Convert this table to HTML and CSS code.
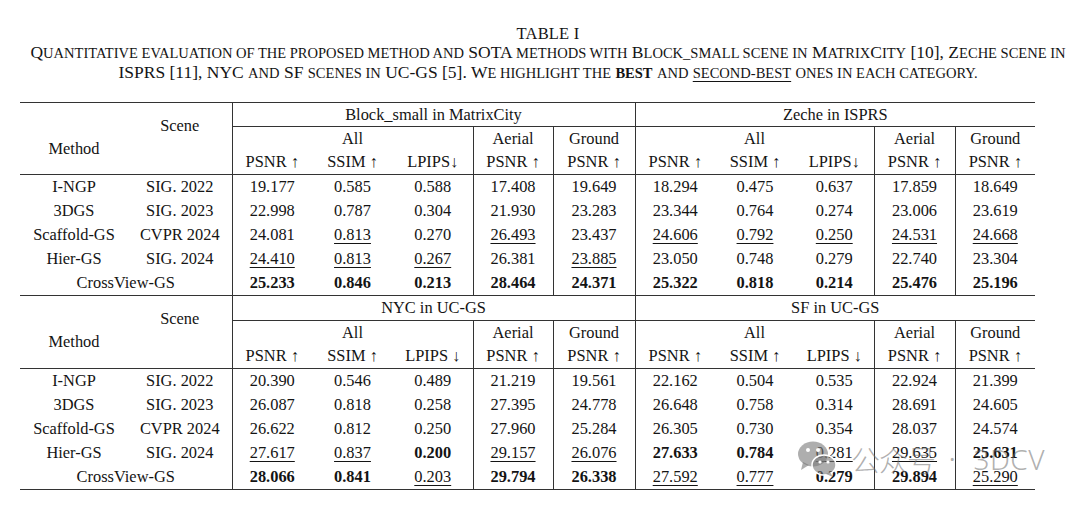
FILE: index.html
```html
<!DOCTYPE html>
<html>
<head>
<meta charset="utf-8">
<link rel="stylesheet" href="styles.css">
</head>
<body>
<div class="page">
  <div class="caption">
    <div class="title">TABLE I</div>
    <div class="cap-line">Q<span class="sc">uantitative evaluation of the proposed method and</span> SOTA <span class="sc">methods with</span> B<span class="sc">lock_small scene in</span> M<span class="sc">atrix</span>C<span class="sc">ity</span> [10], Z<span class="sc">eche scene in</span></div>
    <div class="cap-line">ISPRS [11], NYC <span class="sc">and</span> SF <span class="sc">scenes in</span> UC-GS [5]. W<span class="sc">e highlight the</span> <b class="sc">best</b> <span class="sc">and</span> <span class="sc u">second-best</span> <span class="sc">ones in each category.</span></div>
  </div>

  <table class="res">
    <colgroup>
      <col class="c-method"><col class="c-scene">
      <col class="c80"><col class="c81"><col class="c80">
      <col class="c80"><col class="c82">
      <col class="c80"><col class="c80"><col class="c79">
      <col class="c81"><col class="c80">
    </colgroup>
    <tbody class="block">
      <tr class="r-grp">
        <td rowspan="3" class="method-h">Method</td>
        <td rowspan="3" class="scene-h">Scene</td>
        <td colspan="5" class="grp vl">Block_small in MatrixCity</td>
        <td colspan="5" class="grp vl">Zeche in ISPRS</td>
      </tr>
      <tr class="r-all">
        <td colspan="3" class="vl">All</td><td class="vl">Aerial</td><td class="vl">Ground</td>
        <td colspan="3" class="vl">All</td><td class="vl">Aerial</td><td class="vl">Ground</td>
      </tr>
      <tr class="metric">
        <td class="vl">PSNR ↑</td><td>SSIM ↑</td><td>LPIPS↓</td><td class="vl">PSNR ↑</td><td class="vl">PSNR ↑</td>
        <td class="vl">PSNR ↑</td><td>SSIM ↑</td><td>LPIPS↓</td><td class="vl">PSNR ↑</td><td class="vl">PSNR ↑</td>
      </tr>
      <tr>
        <td>I-NGP</td><td>SIG. 2022</td>
        <td class="vl">19.177</td><td>0.585</td><td>0.588</td><td class="vl">17.408</td><td class="vl">19.649</td>
        <td class="vl">18.294</td><td>0.475</td><td>0.637</td><td class="vl">17.859</td><td class="vl">18.649</td>
      </tr>
      <tr>
        <td>3DGS</td><td>SIG. 2023</td>
        <td class="vl">22.998</td><td>0.787</td><td>0.304</td><td class="vl">21.930</td><td class="vl">23.283</td>
        <td class="vl">23.344</td><td>0.764</td><td>0.274</td><td class="vl">23.006</td><td class="vl">23.619</td>
      </tr>
      <tr>
        <td>Scaffold-GS</td><td>CVPR 2024</td>
        <td class="vl">24.081</td><td><span class="u">0.813</span></td><td>0.270</td><td class="vl"><span class="u">26.493</span></td><td class="vl">23.437</td>
        <td class="vl"><span class="u">24.606</span></td><td><span class="u">0.792</span></td><td><span class="u">0.250</span></td><td class="vl"><span class="u">24.531</span></td><td class="vl"><span class="u">24.668</span></td>
      </tr>
      <tr>
        <td>Hier-GS</td><td>SIG. 2024</td>
        <td class="vl"><span class="u">24.410</span></td><td><span class="u">0.813</span></td><td><span class="u">0.267</span></td><td class="vl">26.381</td><td class="vl"><span class="u">23.885</span></td>
        <td class="vl">23.050</td><td>0.748</td><td>0.279</td><td class="vl">22.740</td><td class="vl">23.304</td>
      </tr>
      <tr class="last">
        <td colspan="2">CrossView-GS</td>
        <td class="vl"><b>25.233</b></td><td><b>0.846</b></td><td><b>0.213</b></td><td class="vl"><b>28.464</b></td><td class="vl"><b>24.371</b></td>
        <td class="vl"><b>25.322</b></td><td><b>0.818</b></td><td><b>0.214</b></td><td class="vl"><b>25.476</b></td><td class="vl"><b>25.196</b></td>
      </tr>
    </tbody>
    <tbody class="block second">
      <tr class="r-grp">
        <td rowspan="3" class="method-h">Method</td>
        <td rowspan="3" class="scene-h">Scene</td>
        <td colspan="5" class="grp vl">NYC in UC-GS</td>
        <td colspan="5" class="grp vl">SF in UC-GS</td>
      </tr>
      <tr class="r-all">
        <td colspan="3" class="vl">All</td><td class="vl">Aerial</td><td class="vl">Ground</td>
        <td colspan="3" class="vl">All</td><td class="vl">Aerial</td><td class="vl">Ground</td>
      </tr>
      <tr class="metric">
        <td class="vl">PSNR ↑</td><td>SSIM ↑</td><td>LPIPS ↓</td><td class="vl">PSNR ↑</td><td class="vl">PSNR ↑</td>
        <td class="vl">PSNR ↑</td><td>SSIM ↑</td><td>LPIPS ↓</td><td class="vl">PSNR ↑</td><td class="vl">PSNR ↑</td>
      </tr>
      <tr>
        <td>I-NGP</td><td>SIG. 2022</td>
        <td class="vl">20.390</td><td>0.546</td><td>0.489</td><td class="vl">21.219</td><td class="vl">19.561</td>
        <td class="vl">22.162</td><td>0.504</td><td>0.535</td><td class="vl">22.924</td><td class="vl">21.399</td>
      </tr>
      <tr>
        <td>3DGS</td><td>SIG. 2023</td>
        <td class="vl">26.087</td><td>0.818</td><td>0.258</td><td class="vl">27.395</td><td class="vl">24.778</td>
        <td class="vl">26.648</td><td>0.758</td><td>0.314</td><td class="vl">28.691</td><td class="vl">24.605</td>
      </tr>
      <tr>
        <td>Scaffold-GS</td><td>CVPR 2024</td>
        <td class="vl">26.622</td><td>0.812</td><td>0.250</td><td class="vl">27.960</td><td class="vl">25.284</td>
        <td class="vl">26.305</td><td>0.730</td><td>0.354</td><td class="vl">28.037</td><td class="vl">24.574</td>
      </tr>
      <tr>
        <td>Hier-GS</td><td>SIG. 2024</td>
        <td class="vl"><span class="u">27.617</span></td><td><span class="u">0.837</span></td><td><b>0.200</b></td><td class="vl"><span class="u">29.157</span></td><td class="vl"><span class="u">26.076</span></td>
        <td class="vl"><b>27.633</b></td><td><b>0.784</b></td><td><span class="u">0.281</span></td><td class="vl"><span class="u">29.635</span></td><td class="vl"><b>25.631</b></td>
      </tr>
      <tr class="last">
        <td colspan="2">CrossView-GS</td>
        <td class="vl"><b>28.066</b></td><td><b>0.841</b></td><td><span class="u">0.203</span></td><td class="vl"><b>29.794</b></td><td class="vl"><b>26.338</b></td>
        <td class="vl"><span class="u">27.592</span></td><td><span class="u">0.777</span></td><td><b>0.279</b></td><td class="vl"><b>29.894</b></td><td class="vl"><span class="u">25.290</span></td>
      </tr>
    </tbody>
  </table>

  <div class="watermark">
    <svg class="wm-icon" width="40" height="38" viewBox="0 0 40 38">
      <ellipse cx="16" cy="14" rx="15" ry="12.5" fill="currentColor"/>
      <path d="M6 22 L4 30 L12 25 Z" fill="currentColor"/>
      <ellipse cx="27" cy="25" rx="12" ry="10" fill="currentColor" stroke="#fff" stroke-width="1.5"/>
      <path d="M33 32 L36 37 L29 34 Z" fill="currentColor"/>
      <circle cx="11" cy="10" r="2" fill="#fff"/>
      <circle cx="21" cy="10" r="2" fill="#fff"/>
      <circle cx="23" cy="22" r="1.6" fill="#fff"/>
      <circle cx="31" cy="22" r="1.6" fill="#fff"/>
    </svg>
    <span class="wm-text">公众号</span>
    <span class="wm-dot">·</span>
    <span class="wm-brand">3DCV</span>
  </div>
</div>
</body>
</html>
```
FILE: styles.css
```css
html, body {
  margin: 0;
  padding: 0;
  background: #ffffff;
}
.page {
  position: relative;
  width: 1080px;
  height: 506px;
  overflow: hidden;
  font-family: "Liberation Serif", "Times New Roman", serif;
  color: #141414;
}
.caption {
  padding: 24px 0 0 16px;
  text-align: center;
  font-size: 17.5px;
  line-height: 19px;
}
.title {
  font-size: 16.5px;
  letter-spacing: 0.2px;
}
.cap-line {
  white-space: nowrap;
}
.sc {
  font-size: 0.83em;
  text-transform: uppercase;
}
.u {
  text-decoration: underline;
  text-decoration-thickness: 1px;
  text-underline-offset: 3px;
}
.res {
  margin: 19px 0 0 20px;
  width: 1015px;
  table-layout: fixed;
  border-collapse: collapse;
  font-size: 16.4px;
}
.c-method { width: 108px; }
.c-scene { width: 104px; }
.c79 { width: 79px; }
.c80 { width: 80px; }
.c81 { width: 81px; }
.c82 { width: 82px; }
.res td {
  padding: 0;
  height: 24px;
  line-height: 24px;
  text-align: center;
  vertical-align: middle;
  white-space: nowrap;
}
.res .r-grp td,
.res .r-all td {
  height: 23px;
  line-height: 23px;
}
.res .second .r-grp td {
  height: 24px;
  line-height: 24px;
}
.res td.vl {
  border-left: 1px solid #333;
}
.block tr:first-child td {
  border-top: 1px solid #333;
}
.res td.grp {
  border-bottom: 1px solid #333;
}
.metric td {
  border-bottom: 1px solid #333;
}
.res td.method-h {
  border-bottom: 1px solid #333;
  padding-top: 20px;
}
.res td.scene-h {
  border-bottom: 1px solid #333;
  padding-bottom: 26px;
}
.block tr.last td {
  border-bottom: 1px solid #333;
}
.watermark {
  position: absolute;
  left: 797px;
  top: 440px;
  display: flex;
  align-items: center;
  gap: 10px;
  color: rgba(110, 110, 110, 0.55);
  pointer-events: none;
}
.wm-icon {
  display: block;
  color: rgba(120, 120, 120, 0.6);
}
.wm-text {
  font-family: "Noto Sans CJK SC", sans-serif;
  font-size: 29px;
  line-height: 38px;
  font-weight: 300;
  letter-spacing: -1px;
  margin-left: 4px;
}
.wm-dot {
  font-family: "Noto Sans", sans-serif;
  font-size: 24px;
  line-height: 38px;
  margin: 0 8px 0 4px;
}
.wm-brand {
  font-family: "Noto Sans", sans-serif;
  font-size: 28px;
  line-height: 38px;
  font-weight: 300;
  letter-spacing: 0.5px;
}
```
